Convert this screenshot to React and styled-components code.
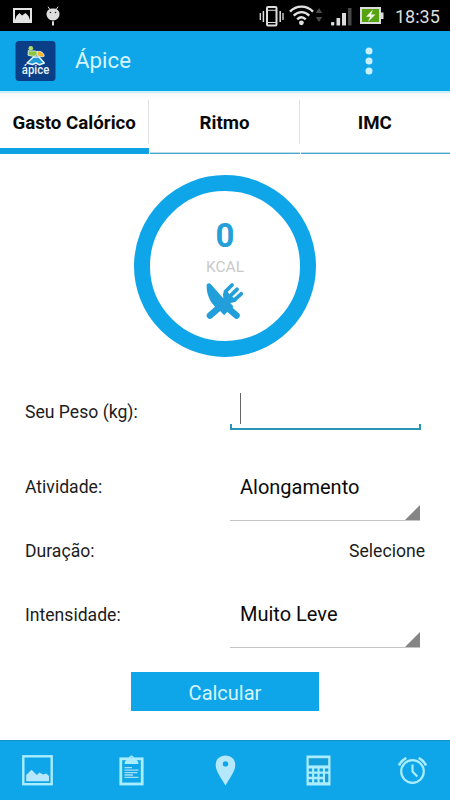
import React, { useState } from "react";
import styled, { createGlobalStyle } from "styled-components";

const GlobalStyle = createGlobalStyle`
    * {
        box-sizing: border-box;
    }
    body {
        margin: 0;
        background: #ffffff;
        font-family: Roboto, "Liberation Sans", sans-serif;
    }
`;

const Screen = styled.div`
    width: 450px;
    height: 800px;
    display: flex;
    flex-direction: column;
    overflow: hidden;
    background: #ffffff;
    color: #111111;

    svg {
        display: block;
        flex: none;
    }
`;

const StatusBar = styled.div`
    height: 31px;
    flex: none;
    display: flex;
    align-items: center;
    padding: 0 10px 0 13px;
    background: #000000;
`;

const Notices = styled.div`
    flex: 1;
    display: flex;
    align-items: center;
    gap: 14px;
`;

const Clock = styled.span`
    width: 45px;
    margin-left: 10px;
    padding-top: 2px;
    font-size: 18px;
    line-height: 22px;
    white-space: nowrap;
    color: #dedede;
`;

const AppBar = styled.header`
    height: 60px;
    flex: none;
    display: flex;
    align-items: center;
    padding: 0 77px 0 15px;
    background: #0fa5e9;
`;

const Title = styled.h1`
    flex: 1;
    margin: 0 0 2px 19px;
    font-size: 22.3px;
    line-height: 26px;
    font-weight: 400;
    color: #d5f6ff;
`;

const MenuButton = styled.button`
    padding: 0;
    border: 0;
    background: none;
`;

const TabList = styled.nav`
    height: 63px;
    flex: none;
    display: grid;
    grid-template-columns: repeat(3, 1fr);
    column-gap: 1px;
    border-top: 2px solid #c9f0f6;
    background: linear-gradient(#f7f7f8, #ffffff 8px);
`;

const Tab = styled.button`
    display: flex;
    flex-direction: column;
    padding: 0;
    border: 0;
    background: none;
    font-family: inherit;
    font-size: 18.7px;
    font-weight: 700;
    color: #0a0a0a;
    border-bottom: ${props => props.$active ? "6px solid #0fa2e3" : "1px solid #4ba3c8"};
    box-shadow: ${props => props.$active ? "none" : "inset 0 -1px #b5ddec"};
`;

const TabLabel = styled.span`
    width: 100%;
    height: 44px;
    margin-top: 7px;
    line-height: 47px;
    text-align: center;
    white-space: nowrap;
    border-right: 1px solid ${props => props.$last ? "transparent" : "#dedede"};
`;

const RingArea = styled.section`
    height: 226px;
    flex: none;
    display: flex;
    justify-content: center;
    padding-top: 21px;
`;

const Ring = styled.div`
    width: 182px;
    height: 182px;
    display: flex;
    flex-direction: column;
    align-items: center;
    padding-top: 26px;
    border: 16px solid #0fa5e9;
    border-radius: 50%;
`;

const Calories = styled.span`
    font-size: 33px;
    line-height: 38px;
    font-weight: 700;
    color: #259fd8;
`;

const Unit = styled.span`
    margin: 3px 0 6px;
    font-size: 15.5px;
    line-height: 18px;
    color: #c9c9c9;
`;

const Form = styled.form`
    flex: 1;
    display: flex;
    flex-direction: column;
`;

const Row = styled.div`
    height: ${props => props.$height || 64}px;
    display: grid;
    grid-template-columns: 205px 1fr;
    align-items: center;
    padding: 0 25px;
`;

const Label = styled.label`
    padding-bottom: ${props => props.$lift || 0}px;
    font-size: 17.6px;
    line-height: 22px;
    color: #1c1c1c;
`;

const Field = styled.div`
    width: 191px;
    height: 37px;
    margin-bottom: 27px;
    display: flex;
    flex-direction: column;
    justify-content: space-between;
    align-self: end;
`;

const Caret = styled.span`
    width: 1px;
    height: 31px;
    margin-left: 10px;
    background: #666666;
`;

const FieldLine = styled.span`
    height: 6px;
    border: 2px solid #2795b3;
    border-width: 0 2px 2px;
`;

const Spinner = styled.div`
    width: 190px;
    height: 64px;
    display: flex;
    align-items: flex-end;
    justify-content: space-between;
    padding-left: 10px;
    border-bottom: 1px solid #c4c4c4;
    font-size: 20px;
    color: #0a0a0a;
`;

const SpinnerText = styled.span`
    line-height: 24px;
    margin-bottom: 21px;
`;

const Corner = styled.span`
    width: 15px;
    height: 15px;
    background: #858585;
    clip-path: polygon(100% 0, 100% 100%, 0 100%);
`;

const Duration = styled.span`
    padding-bottom: 3px;
    font-size: 17.6px;
    line-height: 22px;
    text-align: right;
    color: #1c1c1c;
`;

const Submit = styled.button`
    width: 188px;
    height: 39px;
    margin: 24px 0 0 131px;
    padding: 2px 0 0;
    border: 0;
    background: #0fa5e9;
    font-family: inherit;
    font-size: 20px;
    color: #d5f6ff;
`;

const BottomBar = styled.footer`
    height: 60px;
    flex: none;
    display: grid;
    grid-template-columns: repeat(5, 93.75px);
    justify-content: center;
    align-items: center;
    justify-items: center;
    border-top: 1px solid #1590c8;
    background: #0fa5e9;
`;

const PictureNotice = () => (
  <svg width="19" height="15" viewBox="0 0 19 15">
    <path fill="#e4e4e4" fillRule="evenodd" d="M0 0h19v15H0zM2 2v10l1.500-4L6.500 5l2.500 2.500L12.500 5l3 3L17 12V2z" />
  </svg>
);

const DroidNotice = () => (
  <svg width="14" height="20" viewBox="0 0 14 20">
    <path d="M2 .7l2 3M12 .7l-2 3" stroke="#dcdcdc" strokeWidth="1" />
    <path fill="#dcdcdc" d="M.5 8c0-3.500 2.700-5.500 6.500-5.500s6.500 2 6.500 5.500-2.500 6.500-6.500 6.500S.5 11.500.5 8z" />
    <circle cx="4.500" cy="6.500" r=".8" fill="#222" />
    <circle cx="9.500" cy="6.500" r=".8" fill="#222" />
    <path d="M7 15.300v4.200" stroke="#dcdcdc" strokeWidth="2" />
  </svg>
);

// vibrate, wifi, signal and battery
const SystemIcons = () => (
  <svg width="126" height="26" viewBox="261 3 126 26" fill="none">
    <g stroke="#dedede">
      <rect x="269" y="7" width="9.5" height="18.5" rx="1" strokeWidth="2" />
      <path d="M268 10.3h11M268 22.5h11" strokeWidth="1" />
      <path d="M265.4 11v11M282.2 11v11" strokeWidth="1.5" />
      <path d="M262.3 13v7M285 13v7" strokeWidth="1.3" />
    </g>
    <g stroke="#e2e2e2" strokeWidth="2.4">
      <path d="M292 11.6c6.5-6.6 16.5-6.6 23 0" />
      <path d="M295.7 15.6c4.7-4.6 11-4.6 15.6 0" />
      <path d="M299.2 19.4c2.8-2.7 5.8-2.7 8.500 0" />
    </g>
    <circle cx="303.4" cy="22.8" r="2.4" fill="#e2e2e2" />
    <path fill="#4b4b4b" d="M321 8l3.2 5h-6.4zM321 22l3.2-5h-6.4z" />
    <g fill="#dcdcdc">
      <rect x="333" y="22" width="3.3" height="3.5" rx="1" />
      <rect x="338.5" y="18" width="3.6" height="7.5" />
      <rect x="344" y="13" width="4" height="12.5" />
    </g>
    <rect x="350" y="8" width="3.5" height="17.5" fill="#484848" />
    <rect x="363" y="8" width="19" height="15" fill="#56a312" stroke="#dddddd" strokeWidth="2" />
    <rect x="383" y="12.5" width="2.5" height="6.5" fill="#dddddd" />
    <path fill="#f1f5e8" d="M375 9.5l-7 7.2h4.2l-2.4 5.2 7.7-7.3h-4.4z" />
  </svg>
);

const AppLogo = () => (
  <svg width="41" height="40" viewBox="0 0 41 40">
    <rect x=".5" width="40" height="40" rx="3.5" fill="#0a3f88" />
    <path fill="#f2b632" stroke="#e9f7fb" strokeWidth=".8" d="M22 10.500c4-.8 7 1.500 7.200 4.700-2.300 1.300-5 .3-7.500-1z" />
    <path fill="#8cc63f" stroke="#e9f7fb" strokeWidth=".8" d="M13.300 9.500c2.500 1.200 5.500-.5 8.500 1l.5 3-3.500 2-5.800-1.300z" />
    <circle cx="15.800" cy="7.200" r="2.300" fill="#b7dc6a" />
    <path d="M12 22l6.500-6h5.500l5.300 6-4.800 1.800-3.500-1.800-3.500 1.500z" fill="#1f9bd8" stroke="#e3f5fb" strokeWidth="1.500" strokeLinejoin="round" />
    <text x="6.800" y="33.300" textLength="27.500" lengthAdjust="spacingAndGlyphs" fontFamily="Roboto, sans-serif" fontSize="12.500" fontWeight="500" fill="#e6f6ff">ápice</text>
  </svg>
);

const DotsIcon = () => (
  <svg width="8" height="28" viewBox="0 0 8 28" fill="#c8f1fd">
    <circle cx="4" cy="4" r="3.5" />
    <circle cx="4" cy="14" r="3.5" />
    <circle cx="4" cy="24" r="3.5" />
  </svg>
);

const CutleryIcon = () => (
  <svg width="38" height="38" viewBox="0 0 38 38" fill="none" stroke="#229fda" strokeLinecap="round">
    <path d="M12 26.500L4 33.500M23 27l7.500 6.500" strokeWidth="6.500" />
    <path fill="#229fda" stroke="none" d="M.6 3.800c0-2.600 2.700-3.400 4.500-1.400L17.300 16.300l1.400-1.300 8.800 9.500-3.500 4.500-1.300-.5-3 3-1.500 1.800-2-2-2-2.300-2 .8-4-6C3.500 19 .6 11.500.6 3.800z" />
    <path fill="#229fda" stroke="none" d="M17 13c0-2.500 1.200-4.500 3-6l3.500 5.500 7.500 5.800c-2 2-4.300 2.700-7 2.700l-5.500 5-5-6 4-3.500z" />
    <path d="M19.500 9.500l6.500-6.500M24.300 13.800l6.700-6.500M28.500 17.800l6.700-6" strokeWidth="3.800" />
  </svg>
);

const GalleryIcon = () => (
  <svg width="31" height="31" viewBox="0 0 31 31">
    <rect x="1.3" y="1.3" width="28.4" height="27.9" fill="none" stroke="#a9edff" strokeWidth="2.4" />
    <path fill="#b6e7fb" d="M4.2 20l5.3-5.300L14.800 20l2.700-2.500 3.500 2 3.300-1 2.700 2.500v5.200H4.200z" />
  </svg>
);

const ClipboardIcon = () => (
  <svg width="25" height="31" viewBox="0 0 25 31">
    <rect x="1.800" y="3.800" width="21.400" height="25.200" fill="none" stroke="#a9edff" strokeWidth="2.800" />
    <path fill="#a9edff" fillRule="evenodd" d="M5.500 9c0-3 2-4.500 4.300-5 .2-4.800 5.200-4.800 5.400 0 2.300.5 4.300 2 4.300 5zM12.500 2a1.200 1.200 0 100 2.400 1.200 1.200 0 000-2.400z" />
    <path d="M5.500 12.700H13M5.500 15.200h14M5.500 17.700h13M5.500 20H14M5.500 22.300h14" stroke="#a5e0f5" strokeWidth="1.300" />
  </svg>
);

const PinIcon = () => (
  <svg width="21" height="31" viewBox="0 0 21 31">
    <path fill="#b5e8fb" fillRule="evenodd" d="M10.500.5c6 0 9.800 4 9.800 9.500 0 6.500-6 13.500-9.800 20.500C6.700 23.500.7 16.500.7 10 .7 4.500 4.500.5 10.500.5zm0 5.700a2.700 2.700 0 100 5.400 2.700 2.700 0 000-5.400z" />
  </svg>
);

const CalculatorIcon = () => (
  <svg width="25" height="31" viewBox="0 0 25 31">
    <path fill="#a9edff" d="M.5.500h24v30H.5z" />
    <g fill="#149fdc">
      <path d="M2.700 3.200h19.500v7.200H2.700z" />
      <path d="M2.800 13.500h3.300v3H2.800zM8.200 13.500h3.300v3H8.200zM13.600 13.500h3.300v3h-3.300zM19 13.500h3.300v3H19z" />
      <path d="M2.800 18.800h3.300v3H2.800zM8.200 18.800h3.300v3H8.200zM13.600 18.800h3.300v3h-3.300z" />
      <path d="M2.800 24.200h3.300v3H2.800zM8.200 24.200h3.300v3H8.200zM13.600 24.200h3.300v3h-3.300zM19 18.800h3.300v8.400H19z" />
    </g>
  </svg>
);

const AlarmIcon = () => (
  <svg width="29" height="29" viewBox="0 0 29 29" fill="none" stroke="#a9edff">
    <circle cx="14.5" cy="15.5" r="11.3" strokeWidth="2.2" />
    <path d="M14.500 8.500v7l4.800 5" strokeWidth="2.2" />
    <path d="M1 9.500C2.500 6 5 3.500 8.300 1.800M28 9.500c-1.500-3.500-4-6-7.300-7.700" strokeWidth="2.6" />
  </svg>
);

const tabs = [
  { id: "gasto", label: "Gasto Calórico" },
  { id: "ritmo", label: "Ritmo" },
  { id: "imc", label: "IMC" },
];

function Select(props) {
  return (
    <Spinner>
      <SpinnerText>{props.value}</SpinnerText>
      <Corner />
    </Spinner>
  );
}

function App() {
  const [currentTab, setCurrentTab] = useState("gasto");

  const calculate = (e) => {
    e.preventDefault();
  }

  return (
    <>
      <GlobalStyle />
      <Screen>
        <StatusBar>
          <Notices>
            <PictureNotice />
            <DroidNotice />
          </Notices>
          <SystemIcons />
          <Clock>18:35</Clock>
        </StatusBar>

        <AppBar>
          <AppLogo />
          <Title>Ápice</Title>
          <MenuButton type="button" aria-label="Menu"><DotsIcon /></MenuButton>
        </AppBar>

        <TabList>
          {tabs.map((tab, i) => (
            <Tab
              key={tab.id}
              type="button"
              $active={tab.id === currentTab}
              onClick={() => setCurrentTab(tab.id)}
            >
              <TabLabel $last={i === tabs.length - 1}>{tab.label}</TabLabel>
            </Tab>
          ))}
        </TabList>

        <RingArea>
          <Ring>
            <Calories>0</Calories>
            <Unit>KCAL</Unit>
            <CutleryIcon />
          </Ring>
        </RingArea>

        <Form onSubmit={calculate}>
          <Row $height={77}>
            <Label $lift={13}>Seu Peso (kg):</Label>
            <Field>
              <Caret />
              <FieldLine />
            </Field>
          </Row>
          <Row>
            <Label $lift={4}>Atividade:</Label>
            <Select value="Alongamento" />
          </Row>
          <Row $height={63}>
            <Label $lift={3}>Duração:</Label>
            <Duration>Selecione</Duration>
          </Row>
          <Row>
            <Label $lift={2}>Intensidade:</Label>
            <Select value="Muito Leve" />
          </Row>
          <Submit>Calcular</Submit>
        </Form>

        <BottomBar>
          <GalleryIcon />
          <ClipboardIcon />
          <PinIcon />
          <CalculatorIcon />
          <AlarmIcon />
        </BottomBar>
      </Screen>
    </>
  );
}

export default App;
